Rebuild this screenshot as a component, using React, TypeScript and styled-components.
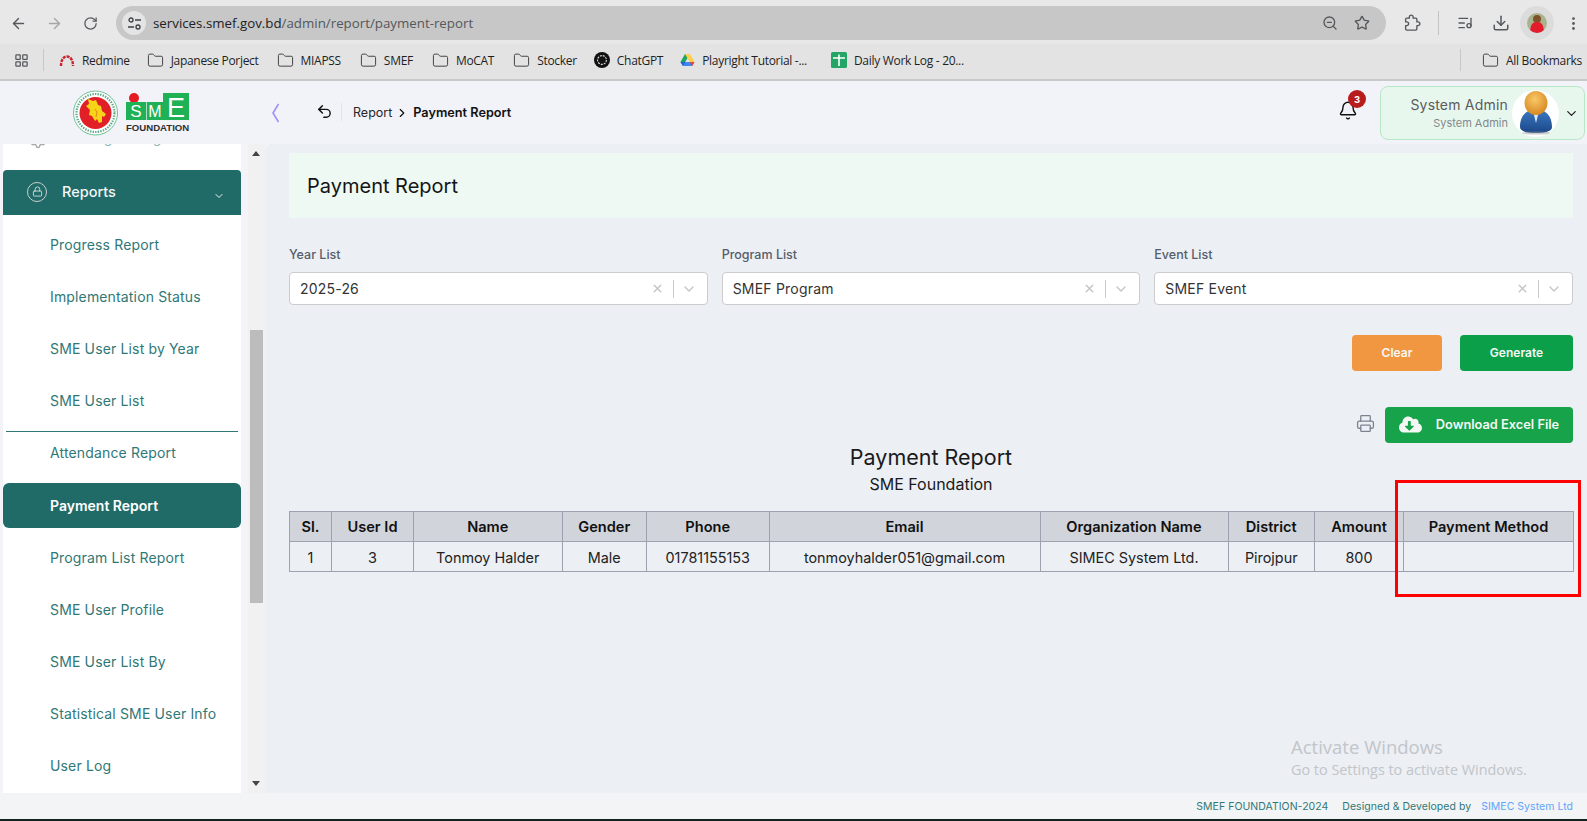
import React from "react";
import styled, { createGlobalStyle } from "styled-components";
import {
  ArrowLeft, ArrowRight, RotateCw, ZoomOut, Star, ListMusic, Download, MoreVertical,
  LayoutGrid, Folder, ChevronDown, X, Printer, Bell, Undo2, ChevronRight, Lock, Settings,
} from "lucide-react";
import { FaCloudDownloadAlt } from "react-icons/fa";

const Global = createGlobalStyle`
  html, body { margin: 0; padding: 0; height: 100%; overflow: hidden; }
  body { font-family: Inter, "Liberation Sans", sans-serif; background: #f2f2f9; }
  #root { height: 100%; }
  * { box-sizing: border-box; }
`;

const Page = styled.div`
  position: relative; width: 1587px; height: 821px; display: flex; flex-direction: column; overflow: hidden;
`;

/* browser chrome */
const Toolbar = styled.div`
  height: 44px; background: #e8e8e8; display: flex; align-items: center; flex: none; color: #5f6368;
  padding: 2px 0 0 0;
`;
const NavButton = styled.span<{ $dim?: boolean }>`
  width: 36px; flex: none; display: flex; justify-content: center; color: ${p => (p.$dim ? "#a4a6a9" : "#55585c")};
`;
const AddressBar = styled.div`
  width: 1270px; height: 34px; margin-left: 8px; background: #c7c7c7; border-radius: 17px;
  display: flex; align-items: center; padding: 0 6px; flex: none;
`;
const TuneBadge = styled.span`
  width: 24px; height: 24px; border-radius: 50%; background: #e4e4e4; display: flex; align-items: center; justify-content: center;
  color: #3c4043;
`;
const Url = styled.span`
  margin-left: 7px; font: 13.3px "Open Sans", "Noto Sans", sans-serif; color: #54575b;
  b { font-weight: 400; color: #202124; }
`;
const AddressRight = styled.span`
  margin-left: auto; display: flex; gap: 16px; padding-right: 10px; align-items: center; color: #55585c;
`;
const ToolRight = styled.div`
  display: flex; align-items: center; flex: none; margin-left: 17px; color: #55585c;
`;
const ToolSep = styled.span`
  width: 1px; height: 24px; background: #c4c4c4; margin: 0 17px 0 17px;
`;
const ToolIcon = styled.span<{ $w?: number; $ml?: number }>`
  width: ${p => p.$w ?? 36}px; margin-left: ${p => p.$ml ?? 0}px; display: flex; justify-content: center; flex: none;
`;
const ProfileWrap = styled.span`
  width: 34px; height: 34px; border-radius: 50%; background: #dcdcdc; display: flex; align-items: center; justify-content: center; flex: none;
`;

const Bookmarks = styled.div`
  height: 37px; background: #e3e3e3; border-bottom: 2px solid #c9c9c9; display: flex; align-items: center; flex: none;
  padding: 0 5px 3px 14px; font: 12px "Open Sans", "Noto Sans", sans-serif; color: #1f1f1f; letter-spacing: -0.3px;
`;
const BookSep = styled.span<{ $after?: number }>`
  width: 1px; height: 22px; background: #c8c8c8; margin: 0 ${p => p.$after ?? 14}px 0 14px;
`;
const Mark = styled.span<{ $gap?: number; $end?: boolean }>`
  display: flex; align-items: center; gap: 7px; white-space: nowrap; margin-right: ${p => p.$gap ?? 19}px;
  ${p => p.$end ? "margin-left: auto; margin-right: 0;" : ""}
  svg { flex: none; }
`;

/* app header */
const AppHeader = styled.header`
  height: 63px; flex: none; display: flex; align-items: center; background: #f2f2f9; position: relative;
`;
const LogoArea = styled.div`
  width: 271px; padding-left: 73px; display: flex; align-items: center; gap: 8px; flex: none; height: 100%;
`;
const Brand = styled.div`
  display: flex; flex-direction: column; width: 64px; margin-top: 1px;
`;
const BrandName = styled.span`
  font: 700 9.6px "Liberation Sans", Arial, sans-serif; color: #2f2f2f; margin-top: 2px;
  white-space: nowrap; line-height: 10px;
`;
const Collapse = styled.span`
  width: 38px; display: flex; justify-content: flex-start; flex: none;
`;
const BackBtn = styled.span`
  width: 30px; height: 18px; display: flex; align-items: center; justify-content: flex-start; padding-left: 4px;
  border-right: 1px solid #e2e2ea; color: #111; flex: none; margin-left: 3px; margin-top: -2px;
`;
const Crumb = styled.div`
  margin-left: 11px; display: flex; align-items: center; gap: 3px; font-size: 12.5px; color: #27272a;
  strong { font-weight: 600; font-size: 12.7px; color: #111; margin-left: 1px; }
  svg { color: #111; }
`;
const HeaderRight = styled.div`
  margin-left: auto; display: flex; align-items: flex-start; padding-right: 2px; align-self: flex-start; padding-top: 5px;
`;
const BellWrap = styled.span`
  position: relative; width: 20px; height: 23px; display: flex; justify-content: center; margin-right: 22px; margin-top: 13px; color: #111;
`;
const Badge = styled.span`
  position: absolute; left: 10px; top: -9px; width: 18px; height: 18px; border-radius: 50%; background: #b91c1c;
  color: #fff; font-size: 9.5px; font-weight: 700; display: flex; align-items: center; justify-content: center;
`;
const UserCard = styled.div`
  width: 205px; height: 54px; background: #e7f7ee; border: 1px solid #b6e8c8; border-radius: 8px; display: flex; align-items: center;
  padding-left: 12px;
`;
const UserText = styled.div`
  flex: 1; text-align: right; color: #5b5b5b; font-size: 14px; line-height: 17px; letter-spacing: 0.2px; padding-top: 2px;
  small { display: block; font-size: 11px; color: #85888c; line-height: 20px; letter-spacing: 0; }
`;
const AvatarCircle = styled.span`
  width: 47px; height: 47px; border-radius: 50%; background: #fff; display: flex; align-items: center; justify-content: center;
  margin-left: 4px; flex: none;
`;
const UserCaret = styled.span`
  width: 25px; display: flex; justify-content: center; color: #222; flex: none;
`;

/* body */
const Body = styled.div`
  flex: 1; display: flex; min-height: 0; background: #f2f2f9;
`;
const Sidebar = styled.nav`
  width: 248px; padding-left: 3px; flex: none; overflow: hidden; background: #f4f4f8;
`;
const SideInner = styled.div`
  background: #fff; width: 238px; margin-top: -17px; height: calc(100% + 17px); overflow: hidden;
`;
const ClippedRow = styled.div`
  height: 24px; margin-bottom: 19px; display: flex; align-items: center; gap: 12px; padding: 0 0 3px 26px;
  font-size: 14px; color: #8db5b3; white-space: nowrap;
  svg { color: #aaa; margin-top: 5px; }
`;
const ReportsBar = styled.div`
  height: 45px; background: #206a68; border-radius: 4px 4px 0 0; color: #f3f6f6; display: flex; align-items: center;
  padding: 0 16px 2px 24px; font-size: 14.5px; font-weight: 500; margin-bottom: 3px;
`;
const LockRing = styled.span`
  width: 20px; height: 20px; border-radius: 50%; border: 1px solid #c9d0cf; display: flex; align-items: center; justify-content: center;
  margin-right: 15px; color: #d5dada;
`;
const ReportsCaret = styled.span`
  margin-left: auto; margin-top: 8px; display: flex;
`;
const SideLink = styled.a`
  display: flex; align-items: center; height: 52px; padding-left: 47px; font-size: 14px; color: #307876; letter-spacing: 0.15px;
  white-space: nowrap;
`;
const RuledLink = styled(SideLink)`
  height: 42px; margin-top: 5px; border-top: 1px solid #307876; width: 232px; margin-left: 3px; padding-left: 44px;
`;
const ActiveLink = styled(SideLink)`
  height: 45px; margin: 10px 0 3px; background: #206a68; color: #fff; border-radius: 6px; font-weight: 600; letter-spacing: 0;
`;
const Scrollbar = styled.div`
  width: 18px; flex: none; background: #f1f1f1; display: flex; flex-direction: column; align-items: center; padding-right: 2px;
`;
const ScrollUp = styled.span`
  margin-top: 7px; width: 0; height: 0; border-left: 4px solid transparent; border-right: 4px solid transparent; border-bottom: 5px solid #444;
`;
const ScrollThumb = styled.span`
  width: 13px; height: 273px; background: #bcbcbc; margin-top: 174px;
`;
const ScrollDown = styled.span`
  margin-top: auto; margin-bottom: 7px; width: 0; height: 0; border-left: 4px solid transparent; border-right: 4px solid transparent; border-top: 5px solid #444;
`;

const Main = styled.main`
  flex: 1; background: #eceff4; border-radius: 10px 0 0 0; padding: 9px 14px 0 23px; min-width: 0; box-shadow: 0 -1px 2px rgba(0,0,0,.04);
`;
const TitleBar = styled.div`
  height: 65px; background: #eff9f3; display: flex; align-items: center; padding-left: 18px; font-size: 20px; color: #141414;
`;
const FilterGrid = styled.div`
  display: grid; grid-template-columns: repeat(3, 1fr); column-gap: 14px; margin-top: 28px;
`;
const FieldLabel = styled.label`
  display: block; font-size: 12.5px; font-weight: 500; color: #565d6b; line-height: 18px; margin-bottom: 8px;
`;
const SelectBox = styled.div`
  height: 33px; background: #fff; border: 1px solid #ccc; border-radius: 4px; display: flex; align-items: center; padding-left: 10px;
  font-size: 14px; color: #333; letter-spacing: 0.2px;
`;
const SelectIcons = styled.span`
  margin-left: auto; display: flex; align-items: center; color: #c4c4c4;
`;
const SelectSep = styled.span`
  width: 1px; height: 18px; background: #ccc; margin: 0 7px 0 9px;
`;
const SelectCaret = styled.span`
  display: flex; margin-right: 10px;
`;
const ActionRow = styled.div`
  display: flex; justify-content: flex-end; gap: 18px; margin-top: 30px;
`;
const Btn = styled.button<{ $bg: string; $w: number; $size?: number }>`
  width: ${p => p.$w}px; height: 36px; border: 0; border-radius: 4px; background: ${p => p.$bg}; color: #f5f7f5;
  font: 600 ${p => p.$size ?? 12}px Inter, sans-serif;
  display: flex; align-items: center; justify-content: center; gap: 14px; padding: 0 0 2px; white-space: nowrap;
`;
const ExportRow = styled.div`
  display: flex; justify-content: flex-end; align-items: center; gap: 10px; margin-top: 36px; color: #7b8290;
  svg.printer { margin-bottom: 4px; }
`;
const ReportHead = styled.div`
  text-align: center; color: #1a1a1a;
`;
const ReportTitle = styled.div`
  font-size: 21.5px; line-height: 28px;
`;
const ReportSub = styled.div`
  font-size: 16px; line-height: 24px; margin-top: 1px;
`;
const Table = styled.table`
  width: 100%; border-collapse: collapse; table-layout: fixed; margin-top: 15px; font-size: 14.4px; color: #222;
  th, td { border: 1px solid #9ca3af; text-align: center; height: 30px; padding: 0; white-space: nowrap; }
  td { padding-top: 2px; }
  th { background: #d1d5db; font-weight: 600; color: #111; font-size: 14.6px; }
`;

const FooterBar = styled.footer`
  height: 26px; flex: none; background: #f3f4f6; display: flex; align-items: center; justify-content: flex-end; padding-right: 14px;
  font-size: 10.5px; color: #307876; gap: 14px; letter-spacing: 0.04px;
  a { color: #60a5fa; margin-left: 7px; }
`;
const BottomEdge = styled.div`
  height: 2px; flex: none; background: #10231f;
`;
const Callout = styled.div`
  position: absolute; left: 1395px; top: 480px; width: 186px; height: 117px; border: 3px solid #fe0000;
`;
const Watermark = styled.div`
  position: absolute; left: 1291px; top: 735px; color: #c2c5c9; font: 18.5px "Open Sans", "Noto Sans", sans-serif; line-height: 24px;
  small { display: block; font-size: 14.4px; line-height: 22px; }
`;

const Emblem = () => (
  <svg width="45" height="46" viewBox="0 0 45 46">
    <circle cx="22.5" cy="23" r="22" fill="#fff" stroke="#6fc096" strokeWidth="1" />
    <circle cx="22.5" cy="23" r="19" fill="none" stroke="#5aa883" strokeWidth="2.2" strokeDasharray="1.4 1.2" />
    <circle cx="22.5" cy="23" r="16" fill="#e01f26" />
    <path d="M15 9l5 2 3-1 2 5 3 1 1 5 4 3-2 3-2-1 0 6-3 1-2-4-2 2-3-5-3-1 1-5-4-4 3-2z" fill="#f7d417" />
    <path d="M22 19l2 3-1 5" stroke="#e8851c" strokeWidth="1" fill="none" />
  </svg>
);

const SmeMark = () => (
  <svg width="64" height="28" viewBox="0 0 64 28" overflow="visible">
    <circle cx="8" cy="5" r="5" fill="#e51a23" />
    <rect x="0" y="9" width="20" height="18" fill="#1fb156" />
    <rect x="20.7" y="9" width="16.5" height="18" fill="#1fb156" />
    <rect x="37" y="0" width="26" height="27" fill="#1fb156" />
    <text x="10" y="24" fontFamily="Liberation Sans" fontSize="17" fill="#fff" textAnchor="middle">S</text>
    <text x="29" y="24" fontFamily="Liberation Sans" fontSize="16" fill="#fff" textAnchor="middle">M</text>
    <text x="50" y="23.5" fontFamily="Liberation Sans" fontSize="27" fill="#fff" textAnchor="middle">E</text>
  </svg>
);

const Person = () => (
  <svg width="34" height="44" viewBox="0 0 34 44">
    <defs>
      <radialGradient id="head" cx="45%" cy="35%" r="70%">
        <stop offset="0" stopColor="#f9c867" />
        <stop offset="1" stopColor="#d4841d" />
      </radialGradient>
      <linearGradient id="suit" x1="0" y1="0" x2="0" y2="1">
        <stop offset="0" stopColor="#3a78c4" />
        <stop offset="1" stopColor="#1b4787" />
      </linearGradient>
    </defs>
    <path d="M1 36c0-10 5-16 12-17l4 4 4-4c7 1 12 7 12 17 0 4-6 6-16 6S1 40 1 36z" fill="url(#suit)" />
    <path d="M14 20l3 12 3-12-3 3z" fill="#dfe9f5" />
    <ellipse cx="17" cy="12" rx="11.5" ry="12" fill="url(#head)" />
    <ellipse cx="17" cy="42" rx="14" ry="1.6" fill="#999" opacity=".5" />
  </svg>
);

const Tune = () => (
  <svg width="15" height="15" viewBox="0 0 15 15" fill="none" stroke="currentColor" strokeWidth="1.3">
    <circle cx="4" cy="4" r="2" />
    <path d="M8 4h6M1 11h6" />
    <circle cx="11" cy="11" r="2" />
  </svg>
);

const ExtensionIcon = () => (
  <svg width="20" height="20" viewBox="0 0 24 24" fill="none" stroke="currentColor" strokeWidth="1.8" strokeLinejoin="round">
    <path d="M20 10.5h-1.5V7a1.5 1.5 0 0 0-1.5-1.5h-3.5V4a2.5 2.5 0 0 0-5 0v1.5H5A1.5 1.5 0 0 0 3.5 7v3.5H5a2.5 2.5 0 0 1 0 5H3.5V20A1.5 1.5 0 0 0 5 21.5h12a1.5 1.5 0 0 0 1.5-1.5v-4.5H20a2.5 2.5 0 0 0 0-5z" />
  </svg>
);

const RedmineIcon = () => (
  <svg width="16" height="13" viewBox="0 0 16 13" fill="none" stroke="#c8242b" strokeWidth="2.4" strokeDasharray="3 1">
    <path d="M2 12C2 6 4.5 2.5 8 2.5S14 6 14 12" />
  </svg>
);
const GptIcon = () => (
  <svg width="16" height="16" viewBox="0 0 16 16">
    <circle cx="8" cy="8" r="8" fill="#111" />
    <circle cx="8" cy="8" r="4.4" fill="none" stroke="#ddd" strokeWidth="1.1" strokeDasharray="2 1" />
  </svg>
);
const DriveIcon = () => (
  <svg width="15" height="14" viewBox="0 0 15 14">
    <path d="M5 1h5L5.2 9H.5z" fill="#1fa463" />
    <path d="M5 1h5l4.6 8h-4.8z" fill="#ffd04b" />
    <path d="M.5 9h14l-2.4 4H3z" fill="#4285f4" />
    <path d="M.5 9h4.7L3 13z" fill="#1967d2" />
    <path d="M14.5 9H9.8l2.3 4z" fill="#ea4335" />
  </svg>
);
const SheetIcon = () => (
  <svg width="16" height="16" viewBox="0 0 16 16">
    <rect width="16" height="16" rx="1.5" fill="#23a566" />
    <path d="M2 6h12M8 2.5V14" stroke="#fff" strokeWidth="1.6" />
  </svg>
);
const ProfilePic = () => (
  <svg width="20" height="20" viewBox="0 0 20 20">
    <clipPath id="pp"><circle cx="10" cy="10" r="10" /></clipPath>
    <g clipPath="url(#pp)">
      <rect width="20" height="20" fill="#a9b48e" />
      <circle cx="10" cy="6" r="4" fill="#7f5329" />
      <path d="M3 22c0-10 2-13 7-13s7 3 7 13z" fill="#e31b2d" />
    </g>
  </svg>
);

const folders = [
  ["Japanese Porject", 18],
  ["MIAPSS", 19],
  ["SMEF", 19],
  ["MoCAT", 19],
  ["Stocker", 17],
] as const;

const links1 = ["Progress Report", "Implementation Status", "SME User List by Year", "SME User List"];
const links2 = ["Program List Report", "SME User Profile", "SME User List By", "Statistical SME User Info", "User Log"];

const filters = [
  { label: "Year List", value: "2025-26" },
  { label: "Program List", value: "SMEF Program" },
  { label: "Event List", value: "SMEF Event" },
];

const columns: [string, number][] = [
  ["Sl.", 42], ["User Id", 82], ["Name", 148.5], ["Gender", 84.5], ["Phone", 122.5], ["Email", 271],
  ["Organization Name", 188], ["District", 86.5], ["Amount", 89], ["Payment Method", 170],
];
const row = ["1", "3", "Tonmoy Halder", "Male", "01781155153", "tonmoyhalder051@gmail.com", "SIMEC System Ltd.", "Pirojpur", "800", ""];

export default function App() {
  return (
    <Page>
      <Global />
      <Toolbar>
        <NavButton><ArrowLeft size={17} /></NavButton>
        <NavButton $dim><ArrowRight size={17} /></NavButton>
        <NavButton><RotateCw size={15} /></NavButton>
        <AddressBar>
          <TuneBadge><Tune /></TuneBadge>
          <Url><b>services.smef.gov.bd</b>/admin/report/payment-report</Url>
          <AddressRight>
            <ZoomOut size={16} />
            <Star size={16} />
          </AddressRight>
        </AddressBar>
        <ToolRight>
          <ToolIcon $w={18}><ExtensionIcon /></ToolIcon>
          <ToolSep />
          <ToolIcon $w={18}><ListMusic size={16} /></ToolIcon>
          <ToolIcon $w={38} $ml={8}><Download size={18} /></ToolIcon>
          <ProfileWrap><ProfilePic /></ProfileWrap>
          <ToolIcon $w={38}><MoreVertical size={17} /></ToolIcon>
        </ToolRight>
      </Toolbar>
      <Bookmarks>
        <LayoutGrid size={15} color="#55585c" />
        <BookSep $after={15} />
        <Mark $gap={17}><RedmineIcon />Redmine</Mark>
        {folders.map(([name, gap]) => (
          <Mark key={name} $gap={gap}><Folder size={17} strokeWidth={1.4} color="#444" />{name}</Mark>
        ))}
        <Mark $gap={17}><GptIcon />ChatGPT</Mark>
        <Mark $gap={24}><DriveIcon />Playright Tutorial -...</Mark>
        <Mark><SheetIcon />Daily Work Log - 20...</Mark>
        <Mark $end><BookSep /><Folder size={17} strokeWidth={1.4} color="#444" />All Bookmarks</Mark>
      </Bookmarks>

      <AppHeader>
        <LogoArea>
          <Emblem />
          <Brand>
            <SmeMark />
            <BrandName>FOUNDATION</BrandName>
          </Brand>
        </LogoArea>
        <Collapse>
          <svg width="9" height="20" viewBox="0 0 9 20" fill="none" stroke="#a08ff5" strokeWidth="1.6">
            <path d="M7.5 1 2 10l5.5 9" />
          </svg>
        </Collapse>
        <BackBtn><Undo2 size={17} /></BackBtn>
        <Crumb>
          Report <ChevronRight size={14} strokeWidth={2} />
          <strong>Payment Report</strong>
        </Crumb>
        <HeaderRight>
          <BellWrap>
            <Bell size={23} strokeWidth={1.7} />
            <Badge>3</Badge>
          </BellWrap>
          <UserCard>
            <UserText>System Admin<small>System Admin</small></UserText>
            <AvatarCircle><Person /></AvatarCircle>
            <UserCaret><ChevronDown size={15} /></UserCaret>
          </UserCard>
        </HeaderRight>
      </AppHeader>

      <Body>
        <Sidebar>
          <SideInner>
            <ClippedRow><Settings size={18} />Training Management</ClippedRow>
            <ReportsBar>
              <LockRing><Lock size={11} /></LockRing>
              Reports
              <ReportsCaret><ChevronDown size={12} /></ReportsCaret>
            </ReportsBar>
            {links1.map(l => <SideLink key={l}>{l}</SideLink>)}
            <RuledLink>Attendance Report</RuledLink>
            <ActiveLink>Payment Report</ActiveLink>
            {links2.map(l => <SideLink key={l}>{l}</SideLink>)}
          </SideInner>
        </Sidebar>
        <Scrollbar>
          <ScrollUp />
          <ScrollThumb />
          <ScrollDown />
        </Scrollbar>
        <Main>
          <TitleBar>Payment Report</TitleBar>
          <FilterGrid>
            {filters.map(f => (
              <div key={f.label}>
                <FieldLabel>{f.label}</FieldLabel>
                <SelectBox>
                  {f.value}
                  <SelectIcons>
                    <X size={13} strokeWidth={2.6} />
                    <SelectSep />
                    <SelectCaret><ChevronDown size={16} /></SelectCaret>
                  </SelectIcons>
                </SelectBox>
              </div>
            ))}
          </FilterGrid>
          <ActionRow>
            <Btn $bg="#f29741" $w={90}>Clear</Btn>
            <Btn $bg="#0c9f49" $w={113}>Generate</Btn>
          </ActionRow>
          <ExportRow>
            <Printer className="printer" size={19} strokeWidth={1.6} />
            <Btn $bg="#16a34a" $w={188} $size={12.8}><FaCloudDownloadAlt size={23} />Download Excel File</Btn>
          </ExportRow>
          <ReportHead>
            <ReportTitle>Payment Report</ReportTitle>
            <ReportSub>SME Foundation</ReportSub>
          </ReportHead>
          <Table>
            <colgroup>
              {columns.map(([n, w]) => <col key={n} width={w} />)}
            </colgroup>
            <thead>
              <tr>{columns.map(([n]) => <th key={n}>{n}</th>)}</tr>
            </thead>
            <tbody>
              <tr>{row.map((c, i) => <td key={i}>{c}</td>)}</tr>
            </tbody>
          </Table>
        </Main>
      </Body>
      <FooterBar>
        <span>SMEF FOUNDATION-2024</span>
        <span>Designed &amp; Developed by <a>SIMEC System Ltd</a></span>
      </FooterBar>
      <BottomEdge />
      <Callout />
      <Watermark>Activate Windows<small>Go to Settings to activate Windows.</small></Watermark>
    </Page>
  );
}
